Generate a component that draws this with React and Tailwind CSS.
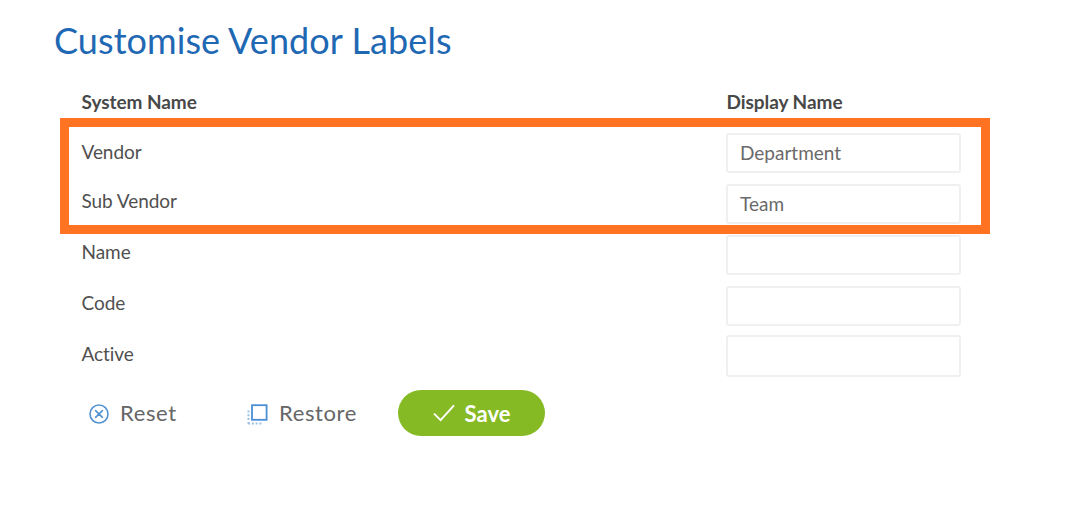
const FIELDS = [
  { name: 'Vendor', value: 'Department', label: '-mt-px', input: 'h-10' },
  { name: 'Sub Vendor', value: 'Team', label: '-mt-[3px]', input: 'h-10' },
  { name: 'Name', value: '', label: '-mt-[3px]', input: 'h-10' },
  { name: 'Code', value: '', label: '-mt-[3px]', input: 'h-10' },
  { name: 'Active', value: '', label: '-mt-[3px]', input: '-mt-[2px] h-[42px]' },
];

function ResetIcon() {
  return (
    <svg className="mt-0.5" width="20" height="20" viewBox="0 0 20 20" fill="none" stroke="#5293d0" strokeWidth="1.6" strokeLinecap="round">
      <circle cx="10" cy="10" r="9" />
      <path d="M6.6 6.6l6.8 6.8M13.4 6.6l-6.8 6.8" />
    </svg>
  );
}

function RestoreIcon() {
  return (
    <svg className="mt-0.5" width="21" height="21" viewBox="0 0 21 21" fill="none" stroke="#4a8fd6">
      <rect x="5" y="1.2" width="14.6" height="14.6" strokeWidth="1.8" />
      <path d="M1.5 6.5V20M1 19.5H15" strokeWidth="2" strokeDasharray="2 1.8" opacity="0.55" />
    </svg>
  );
}

function CheckIcon() {
  return (
    <svg width="22" height="18" viewBox="0 0 22 18" fill="none" stroke="#fff" strokeWidth="1.9">
      <path d="M1 9.6l6.6 6.6L21 1.4" />
    </svg>
  );
}

export default function App() {
  return (
    <main className="relative h-[532px] w-[1080px] overflow-hidden bg-white pt-5 pl-[54px] font-['Lato',sans-serif] text-[#505050] [font-variant-ligatures:none]">
      <h1 className="h-10 text-[36px] leading-10 tracking-[0.07px] whitespace-nowrap text-[#1f68b3]">Customise Vendor Labels</h1>

      <div className="mt-[30px] ml-[27.5px] w-[880px]">
        <div className="flex h-[43px] text-[19px] leading-6 font-bold tracking-[-0.05px] text-[#484848]">
          <span className="w-[645px]">System Name</span>
          <span>Display Name</span>
        </div>

        {FIELDS.map((field) => (
          <div key={field.name} className="flex h-[51px]">
            <label htmlFor={field.name} className={`flex h-10 w-[644.5px] items-center text-[19px] tracking-[-0.05px] ${field.label}`}>
              {field.name}
            </label>
            <input
              id={field.name}
              defaultValue={field.value}
              className={`w-[235px] shrink-0 rounded-[3px] border-2 border-[#f0f0f0] px-3 pb-0.5 text-[19px] text-[#6a6a6a] ${field.input}`}
            />
          </div>
        ))}
      </div>

      <div className="mt-[2px] flex h-[46px] items-center pl-[35px] text-[22px] text-[#666]">
        <button className="flex w-[158px] items-center gap-[11px]">
          <ResetIcon />
          <span className="-mt-px tracking-[0.6px]">Reset</span>
        </button>
        <button className="flex w-[151px] items-center gap-[11px]">
          <RestoreIcon />
          <span className="-mt-px tracking-[0.6px]">Restore</span>
        </button>
        <button className="flex h-[46px] w-[147px] items-center justify-center gap-[10px] rounded-full bg-[#86ba25] font-bold text-white">
          <CheckIcon />
          <span>Save</span>
        </button>
      </div>

      {/* Highlight frame over the first two rows */}
      <div className="pointer-events-none absolute top-[118px] left-[60px] h-[116px] w-[930px] border-9 border-[#ff7322]" />
    </main>
  );
}
